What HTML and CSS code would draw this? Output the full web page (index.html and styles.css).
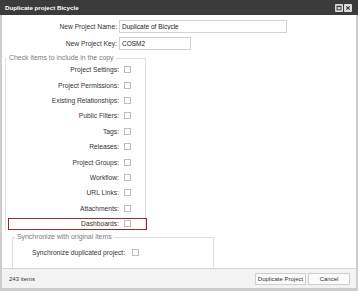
FILE: index.html
```html
<!DOCTYPE html>
<html lang="en">
<head>
<meta charset="UTF-8">
<title>Duplicate project Bicycle</title>
<link rel="stylesheet" href="styles.css">
</head>
<body>
<div class="titlebar">
  <span class="title">Duplicate project Bicycle</span>
  <span class="tools">
    <span class="tool"><svg width="8" height="8" viewBox="0 0 8 8"><rect x="0" y="0" width="8" height="8" rx="1" fill="#dcdcdc"/><rect x="2" y="2.2" width="4" height="3.6" fill="none" stroke="#333" stroke-width="0.9"/><line x1="2" y1="2.6" x2="6" y2="2.6" stroke="#333" stroke-width="1"/></svg></span>
    <span class="tool"><svg width="8" height="8" viewBox="0 0 8 8"><rect x="0" y="0" width="8" height="8" rx="1" fill="#dcdcdc"/><path d="M2.3 2.3 L5.7 5.7 M5.7 2.3 L2.3 5.7" stroke="#333" stroke-width="1.1"/></svg></span>
  </span>
</div>
<div class="panel">
  <div class="main">
    <div class="field">
      <label class="lbl" for="pname">New Project Name:</label>
      <input id="pname" class="txt name" type="text" value="Duplicate of Bicycle">
    </div>
    <div class="field">
      <label class="lbl" for="pkey">New Project Key:</label>
      <input id="pkey" class="txt key" type="text" value="COSM2">
    </div>
    <fieldset class="group items">
      <legend>Check items to include in the copy</legend>
      <div class="row"><label>Project Settings:</label><input type="checkbox"></div>
      <div class="row"><label>Project Permissions:</label><input type="checkbox"></div>
      <div class="row"><label>Existing Relationships:</label><input type="checkbox"></div>
      <div class="row"><label>Public Filters:</label><input type="checkbox"></div>
      <div class="row"><label>Tags:</label><input type="checkbox"></div>
      <div class="row"><label>Releases:</label><input type="checkbox"></div>
      <div class="row"><label>Project Groups:</label><input type="checkbox"></div>
      <div class="row"><label>Workflow:</label><input type="checkbox"></div>
      <div class="row"><label>URL Links:</label><input type="checkbox"></div>
      <div class="row"><label>Attachments:</label><input type="checkbox"></div>
      <div class="row marked"><label>Dashboards:</label><input type="checkbox"></div>
    </fieldset>
    <fieldset class="group sync">
      <legend>Synchronize with original items</legend>
      <div class="row"><label>Synchronize duplicated project:</label><input type="checkbox"></div>
    </fieldset>
  </div>
  <div class="status">
    <span class="count">243 items</span>
    <div class="btns">
      <button class="btn dup">Duplicate Project</button>
      <button class="btn cancel">Cancel</button>
    </div>
  </div>
</div>
</body>
</html>
```

FILE: styles.css
```css
body {
    margin: 0;
    font-family: "Liberation Sans", Arial, sans-serif;
    font-size: 6.7px;
    color: #333;
    background: #fff;
}
.titlebar {
    height: 15px;
    background-color: #3b3b3b;
    color: #fff;
    display: flex;
    align-items: center;
    justify-content: space-between;
    padding: 0 6px 0 5px;
}
.title {
    font-weight: 700;
    font-size: 6.2px;
}
.tools {
    display: flex;
    gap: 1px;
}
.tool {
    display: block;
    width: 8px;
    height: 8px;
}
.tool svg {
    display: block;
}
.panel {
    height: 276px;
    box-sizing: border-box;
    border: 2px solid #cdcdcd;
    border-top: none;
    border-bottom-width: 3px;
    display: flex;
    flex-direction: column;
}
.main {
    flex: 1;
    display: flex;
    flex-direction: column;
    padding-top: 5px;
}
.field {
    display: flex;
    align-items: center;
    height: 13px;
    margin-bottom: 4px;
}
.lbl {
    width: 115px;
    margin-right: 2px;
    text-align: right;
}
.txt {
    box-sizing: border-box;
    height: 13px;
    margin: 0;
    border: 1px solid #d3d3d3;
    padding: 0 0 0 2px;
    font-family: "Liberation Sans", Arial, sans-serif;
    font-size: 6.5px;
    color: #222;
    outline: none;
}
.name {
    width: 168px;
}
.key {
    width: 72px;
}
.group {
    margin: 0;
    padding: 0;
    border: 1px solid #dedede;
    border-bottom: none;
    min-width: 0;
}
.group legend {
    padding: 0 2px;
    margin-left: 1px;
    line-height: 8px;
    color: #7a7a7a;
    font-size: 6.9px;
}
.items {
    margin: 0 0 0 3px;
    width: 141px;
    box-sizing: border-box;
}
.row {
    display: flex;
    align-items: center;
    height: 15.4px;
}
.row label {
    width: 113px;
    text-align: right;
}
.row input {
    appearance: none;
    -webkit-appearance: none;
    box-sizing: border-box;
    width: 7px;
    height: 7px;
    margin: 0 0 0 5px;
    border: 1px solid #bdbdbd;
    background: #fff;
}
.row.marked {
    box-sizing: border-box;
    height: 12px;
    margin: 1.6px -2px 1.8px 2px;
    border: 1px solid #8b2d2d;
}
.row.marked label {
    width: 110px;
}
.sync {
    flex: 1;
    margin: 2px 0 0 10px;
    width: 202px;
    box-sizing: border-box;
}
.sync legend {
    margin-left: 2px;
}
.sync .row {
    margin-top: 4px;
}
.sync .row label {
    width: 112px;
}
.sync .row input {
    margin-left: 7px;
}
.status {
    height: 20px;
    box-sizing: border-box;
    border-top: 1px solid #d6d6d6;
    background-color: #f3f3f3;
    display: flex;
    align-items: center;
    justify-content: space-between;
    padding: 0 6px 0 7px;
}
.count {
    font-size: 6px;
}
.btns {
    display: flex;
    gap: 2px;
}
.btn {
    height: 12px;
    box-sizing: border-box;
    margin: 0;
    padding: 0;
    border: 1px solid #cfcfcf;
    background: #fbfbfb;
    font-family: "Liberation Sans", Arial, sans-serif;
    font-size: 6px;
    color: #333;
}
.dup {
    width: 51px;
}
.cancel {
    width: 42px;
}
```
